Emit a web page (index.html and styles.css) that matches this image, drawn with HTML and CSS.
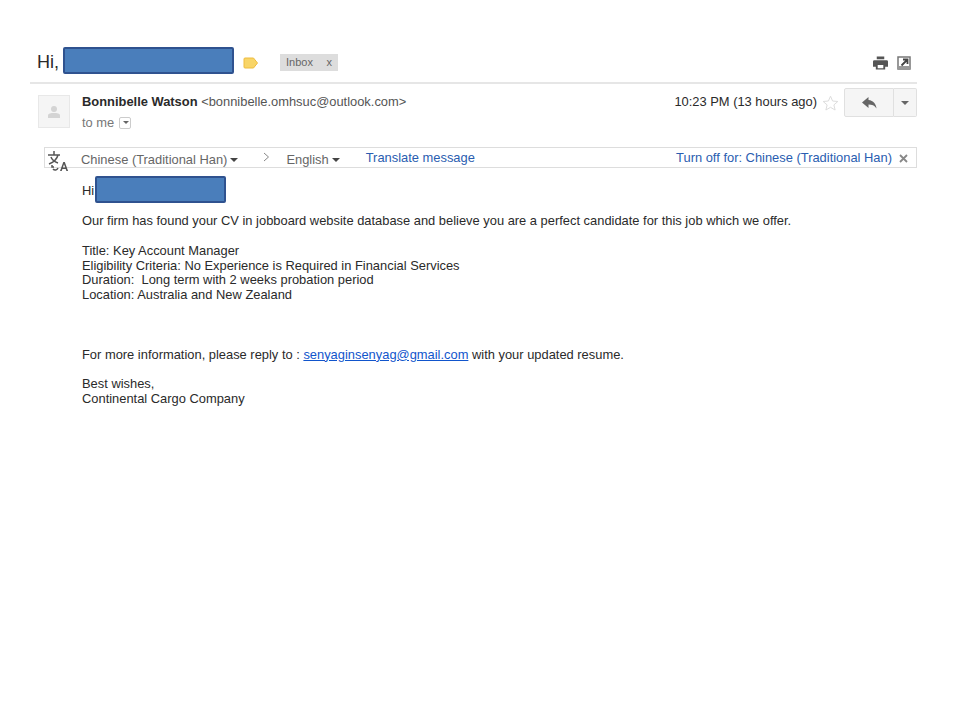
FILE: index.html
```html
<!DOCTYPE html>
<html lang="en">
<head>
<meta charset="utf-8">
<title>Mail</title>
<link rel="stylesheet" href="styles.css">
</head>
<body>
<main class="mail">
  <header class="subject-row">
    <h1 class="subject">Hi,</h1>
    <span class="redact redact-subject"></span>
    <svg class="tag" width="16" height="12" viewBox="0 0 16 12"><path d="M2 1h8.500l4 5-4 5H2a1 1 0 0 1-1-1V2a1 1 0 0 1 1-1z" fill="#f8d568" stroke="#eebc3f"/></svg>
    <span class="label"><span>Inbox</span><span>x</span></span>
    <span class="top-icons">
      <svg width="15" height="14" viewBox="0 0 16 14"><path d="M4 0h8v3H4zM1.500 4h13A1.500 1.500 0 0 1 16 5.500V11h-3v3H3v-3H0V5.500A1.500 1.500 0 0 1 1.500 4zM5 9v3.500h6V9z" fill="#555" fill-rule="evenodd"/></svg>
      <svg width="14" height="14" viewBox="0 0 14 14"><path d="M1 1h12v12H1z" fill="#fff" stroke="#777" stroke-width="1.500"/><path d="M1 10h12v3H1z" fill="#999"/><path d="M4.500 9.500 10 4M6 3.500h4.500V8" fill="none" stroke="#444" stroke-width="1.800"/></svg>
    </span>
  </header>

  <section class="sender-row">
    <div class="avatar">
      <svg width="14" height="14" viewBox="0 0 14 14"><circle cx="7" cy="4" r="3" fill="#d4d4d4"/><path d="M1 13v-2.500C1 8.500 4 8 7 8s6 .5 6 2.500V13z" fill="#d4d4d4"/></svg>
    </div>
    <div class="sender-info">
      <div class="from"><strong>Bonnibelle Watson</strong> <span class="addr">&lt;bonnibelle.omhsuc@outlook.com&gt;</span></div>
      <div class="to">to me <span class="to-caret"></span></div>
    </div>
    <div class="meta">
      <span class="time">10:23 PM (13 hours ago)</span>
      <svg class="star" width="17" height="16" viewBox="0 0 17 16"><path d="M8.500 1.200 10.600 6l5.200.5-3.900 3.400 1.200 5.100-4.600-2.700L3.900 15l1.200-5.100L1.200 6.500 6.400 6z" fill="none" stroke="#ddd"/></svg>
      <div class="reply-group">
        <button class="reply" type="button" aria-label="Reply">
          <svg width="15" height="12" viewBox="0 0 15 12"><path d="M6.500 0 0 5.500 6.500 11V7.500c3.500 0 6 .8 8 4-.5-4.500-3-8-8-8.500z" fill="#666"/></svg>
        </button>
        <button class="more" type="button" aria-label="More"><span class="caret caret-grey"></span></button>
      </div>
    </div>
  </section>

  <section class="translate-bar">
    <svg class="translate-icon" width="22" height="22" viewBox="0 0 22 22"><g fill="none" stroke="#555" stroke-width="1.500"><path d="M1 5h12M7 1v4M11 5c-1 4-4 7-9 9M4 7c1 3 4 5 7 6"/><path d="M6 19a3 3 0 0 0 5-1M5 15v2h2"/></g><path d="M13 21l3.300-9h1.500l3.300 9h-1.700l-.7-2h-3.300l-.7 2zm2.900-3.400h2.300L17 14.200z" fill="#555"/></svg>
    <span class="lang lang-from">Chinese (Traditional Han)<span class="caret"></span></span>
    <svg class="chevron" width="7" height="10" viewBox="0 0 7 10"><path d="M1 1l4.500 4L1 9" fill="none" stroke="#888"/></svg>
    <span class="lang lang-to">English<span class="caret"></span></span>
    <a class="tlink translate-msg">Translate message</a>
    <a class="tlink turn-off">Turn off for: Chinese (Traditional Han)</a>
    <svg class="close" width="9" height="9" viewBox="0 0 9 9"><path d="M1 1l7 7M8 1 1 8" stroke="#888" stroke-width="1.800"/></svg>
  </section>

  <article class="body">
    <div class="greeting">Hi<span class="redact redact-body"></span></div>
    <p>Our firm has found your CV in jobboard website database and believe you are a perfect candidate for this job which we offer.</p>
    <p class="job">Title: Key Account Manager<br>Eligibility Criteria: No Experience is Required in Financial Services<br>Duration:&nbsp; Long term with 2 weeks probation period<br>Location: Australia and New Zealand</p>
    <p class="more-info">For more information, please reply to : <a class="mail-link">senyaginsenyag@gmail.com</a> with your updated resume.</p>
    <p class="sign-off">Best wishes,<br>Continental Cargo Company</p>
  </article>
</main>
</body>
</html>
```
FILE: styles.css
```css
* { box-sizing: border-box; }
html, body { margin: 0; background: #fff; }
body { font-family: "Liberation Sans", Arial, sans-serif; color: #2a2a2a; height: 720px; overflow: hidden; }
.mail { width: 887px; margin-left: 30px; padding-top: 47px; }

.subject-row { display: flex; align-items: center; height: 27px; padding-left: 7px; }
.subject { margin: 0 4px 0 0; padding-top: 4px; font-size: 18px; font-weight: 400; line-height: 23px; color: #2a2a2a; }
.redact { display: inline-block; background: #4a7ebb; border: 2px solid #2f528f; border-radius: 2px; }
.redact-subject { width: 171px; height: 27px; }
.tag { margin-left: 9px; margin-top: 5px; }
.label { display: flex; justify-content: space-between; width: 58px; height: 17px; margin-left: 21px; margin-top: 4px; padding: 0 6px; background: #ddd; color: #666; font-size: 11px; line-height: 17px; }
.top-icons { display: flex; gap: 9px; align-items: center; margin-left: auto; margin-right: 6px; margin-top: 5px; }

.sender-row { display: flex; margin-top: 8px; border-top: 2px solid #e6e6e6; padding: 9px 0 0 8px; height: 65px; }
.avatar { width: 32px; height: 33px; display: flex; align-items: center; justify-content: center; background: #f5f5f5; border: 1px solid #e8e8e8; margin-top: 2px; }
.sender-info { margin-left: 12px; font-size: 12.900px; }
.from { line-height: 17px; color: #555; }
.from strong { color: #2a2a2a; }
.addr { color: #555; }
.to { margin-top: 5px; line-height: 15px; color: #777; display: flex; align-items: center; gap: 5px; }
.to-caret { position: relative; width: 12px; height: 12px; border: 1px solid #ccc; border-radius: 2px; display: inline-block; }
.to-caret::after { content: ""; position: absolute; left: 2.500px; top: 3.500px; border: 3px solid transparent; border-top-color: #666; border-bottom: 0; }
.meta { margin-left: auto; display: flex; align-items: flex-start; height: 30px; }
.time { font-size: 12.900px; line-height: 17px; color: #2a2a2a; }
.star { margin: 2px 5px 0 5px; }
.reply-group { display: flex; height: 29px; margin-top: -5px; }
.reply-group button { background: #f5f5f5; border: 1px solid #e0e0e0; padding: 0; display: flex; align-items: center; justify-content: center; }
.reply { width: 50px; border-radius: 2px 0 0 2px; }
.more { width: 23px; border-left: 0 !important; border-radius: 0 2px 2px 0; }

.translate-bar { display: flex; align-items: center; height: 21px; margin-left: 14px; border: 1px solid #ddd; font-size: 12.900px; white-space: nowrap; }
.translate-icon { margin: 2px 0 -4px 2px; flex: none; }
.lang { color: #666; margin-top: 4px; display: inline-flex; align-items: center; }
.lang-from { margin-left: 12px; }
.chevron { margin: -2px 0 0 25px; }
.lang-to { margin-left: 16px; }
.caret { display: inline-block; border: 4px solid transparent; border-top-color: #444; border-bottom: 0; margin-left: 3px; }
.caret-grey { border-top-color: #666; margin: 0; }
.tlink { color: #2a5db0; }
.translate-msg { margin-left: 26px; margin-top: -1px; }
.turn-off { margin-left: auto; margin-top: -1px; }
.close { margin: 2px 8px 0 7px; }

.body { margin-left: 52px; font-size: 12.900px; line-height: 15px; color: #2a2a2a; }
.greeting { display: flex; align-items: center; height: 27px; margin-top: 8px; padding-top: 2px; }
.redact-body { width: 131px; height: 27px; margin-top: -2px; margin-left: 1px; }
.body p { margin: 15px 0 0; }
.greeting + p { margin-top: 10px; }
.body .job { line-height: 14.670px; padding-top: 1px; }
.body .more-info { margin-top: 44px; }
.body .sign-off { margin-top: 14px; }
.mail-link { color: #1155cc; text-decoration: underline; }
```
